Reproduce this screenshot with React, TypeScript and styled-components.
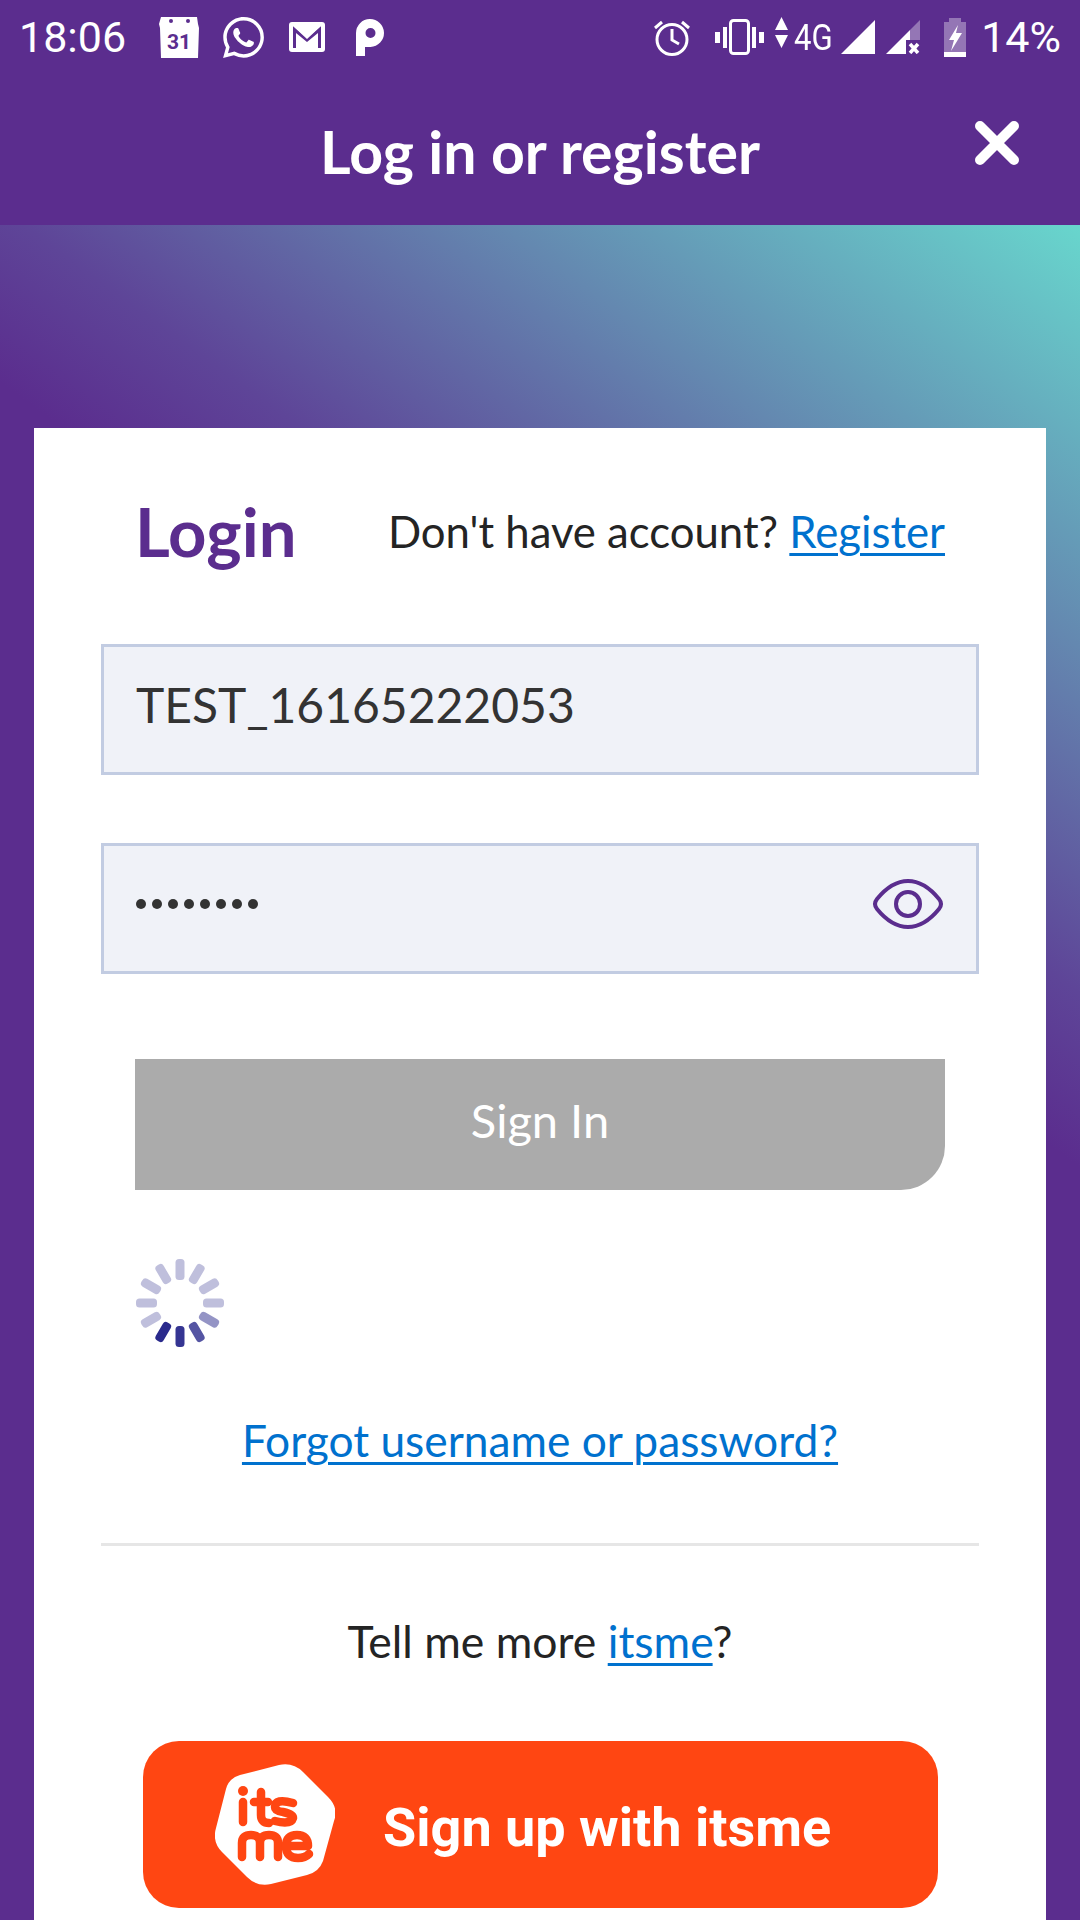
import styled, { createGlobalStyle } from 'styled-components';
import { SiWhatsapp } from 'react-icons/si';

const GlobalStyle = createGlobalStyle`
  html, body {
    margin: 0;
    padding: 0;
    background: #5b2d8e;
    font-family: 'Lato', 'Open Sans', sans-serif;
  }
`;

const Page = styled.div`
  width: 1080px;
  height: 1920px;
  overflow: hidden;
  display: flex;
  flex-direction: column;
  background: #5b2d8e;
`;

const TopArea = styled.div`
  height: 225px;
  flex-shrink: 0;
  display: flex;
  flex-direction: column;
`;

const StatusBar = styled.div`
  height: 74px;
  display: flex;
  align-items: center;
  justify-content: space-between;
  padding: 0 19px;
  color: #fff;
  font-family: 'Roboto', sans-serif;
`;

const StatusGroup = styled.div`
  display: flex;
  align-items: center;
`;

const StatusText = styled.span<{ $ml?: number }>`
  font-size: 43px;
  line-height: 1;
  margin-left: ${(p) => p.$ml || 0}px;
`;

const NetworkText = styled.span`
  display: inline-block;
  width: 37px;
  margin-left: 6px;
  font-size: 37px;
  line-height: 1;
  white-space: nowrap;
  transform: scaleX(0.84);
  transform-origin: left center;
`;

const StatusIcon = styled.svg<{ $ml?: number; $mt?: number }>`
  flex-shrink: 0;
  margin-left: ${(p) => p.$ml || 0}px;
  margin-top: ${(p) => p.$mt || 0}px;
`;

const WhatsappIcon = styled(SiWhatsapp)`
  flex-shrink: 0;
  margin-left: 24px;
`;

const Header = styled.div`
  flex: 1;
  display: flex;
  align-items: center;
  justify-content: center;
  position: relative;
  padding-top: 4px;
`;

const HeaderTitle = styled.h1`
  margin: 0;
  font-size: 59px;
  font-weight: 700;
  color: #fff;
`;

const CloseButton = styled.button`
  position: absolute;
  right: 61px;
  top: 47px;
  width: 44px;
  height: 44px;
  padding: 0;
  border: none;
  background: none;
  display: flex;
`;

const Body = styled.div`
  flex: 1;
  display: flex;
  padding: 203px 34px 0;
  background: linear-gradient(216deg, #68d6cd 0%, #6488b0 17%, #5e4598 31%, #5b2d8e 38%);
`;

const Card = styled.div`
  flex: 1;
  background: #fff;
  display: flex;
  flex-direction: column;
`;

const LoginRow = styled.div`
  height: 216px;
  box-sizing: border-box;
  flex-shrink: 0;
  display: flex;
  align-items: center;
  justify-content: space-between;
  padding: 0 101px 10px;
`;

const LoginTitle = styled.h2`
  margin: 0;
  font-size: 67px;
  font-weight: 700;
  color: #5b2d8e;
`;

const RegisterText = styled.div`
  font-size: 43.7px;
  color: #242424;
`;

const Link = styled.a`
  color: #0071ce;
  text-decoration: underline;
  text-decoration-thickness: 3px;
  text-underline-offset: 5px;
`;

const Field = styled.div<{ $mb: number }>`
  height: 131px;
  box-sizing: border-box;
  margin: 0 67px ${(p) => p.$mb}px;
  background: #f0f2f8;
  border: 3px solid #c2cce2;
  display: flex;
  align-items: center;
  justify-content: space-between;
  padding: 0 32px 10px;
  flex-shrink: 0;
`;

const FieldValue = styled.span`
  font-size: 48px;
  color: #333;
`;

const Dots = styled.span`
  display: flex;
  gap: 6px;
`;

const Dot = styled.span`
  width: 10px;
  height: 10px;
  border-radius: 50%;
  background: #333;
`;

const SignInButton = styled.button`
  height: 131px;
  margin: 0 101px;
  padding: 0 0 10px;
  flex-shrink: 0;
  border: none;
  background: #ababab;
  color: #fff;
  font-family: inherit;
  font-size: 47px;
  border-bottom-right-radius: 44px;
`;

const SpinnerWrap = styled.div`
  height: 90px;
  margin: 68px 0 0 101px;
  flex-shrink: 0;
  display: flex;
`;

const SpinnerSvg = styled.svg`
  filter: blur(0.7px);
`;

const Forgot = styled.div`
  margin-top: 67px;
  text-align: center;
  font-size: 44.3px;
  line-height: 50px;
  flex-shrink: 0;
`;

const Divider = styled.div`
  height: 3px;
  margin: 78px 67px 0;
  background: #e6e6e6;
  flex-shrink: 0;
`;

const TellMore = styled.div`
  margin-top: 70px;
  text-align: center;
  font-size: 44.5px;
  line-height: 50px;
  color: #242424;
  flex-shrink: 0;
`;

const ItsmeButton = styled.button`
  height: 167px;
  margin: 75px 108px 0 109px;
  flex-shrink: 0;
  border: none;
  border-radius: 36px;
  background: #ff4612;
  color: #fff;
  display: flex;
  align-items: center;
  padding: 0 0 0 72px;
  gap: 48px;
  font-family: 'Roboto', sans-serif;
  font-weight: 700;
  font-size: 54px;
`;

const ItsmeLabel = styled.span`
  padding-top: 6px;
`;

function Spinner() {
  const bars = [0.3, 0.3, 0.3, 0.3, 0.5, 0.8, 0.95, 1, 0.3, 0.3, 0.3, 0.3];
  return (
    <SpinnerSvg width="90" height="90" viewBox="0 0 90 90">
      {bars.map((o, i) => (
        <rect
          key={i}
          x="40.5"
          y="1"
          width="9"
          height="21"
          rx="3.5"
          fill="#2a2a8c"
          opacity={o}
          transform={`rotate(${i * 30} 45 45)`}
        />
      ))}
    </SpinnerSvg>
  );
}

function ItsmeLogo() {
  return (
    <svg width="120" height="121" viewBox="0 0 120 121">
      <path
        d="M25 11 L64 1 Q78 -2 88 8 L113 33 Q124 44 119 57 L108 97 Q104 108 92 111 L56 120 Q42 123 32 113 L7 88 Q-3 78 1 64 L11 25 Q14 14 25 11 Z"
        fill="#fff"
      />
      <g fill="none" stroke="#ff4612" strokeWidth="8.500" strokeLinecap="round" strokeLinejoin="round">
        <path d="M28 38 V58" />
        <path d="M46 28 V51 Q46 59 54 59 M39 38 H53" />
        <path d="M78 39 Q60 34 60 43 Q60 47 68 48 Q78 50 78 54 Q76 61 60 57" />
        <path d="M27 93 V79 Q27 71 36 71 Q45 71 45 79 V93 M45 79 Q45 71 54 71 Q63 71 63 79 V93" />
        <path d="M72 82 H93 Q93 71 82 71 Q71 71 71 82 Q71 94 83 94 Q90 94 94 90" />
      </g>
      <circle cx="28" cy="27" r="5" fill="#ff4612" />
    </svg>
  );
}

export default function App() {
  return (
    <Page>
      <GlobalStyle />
      <TopArea>
        <StatusBar>
          <StatusGroup>
            <StatusText>18:06</StatusText>
            <StatusIcon $ml={33} width="40" height="42" viewBox="0 0 40 42">
              <path d="M2 1 H38 L39 8 L40 12 L39 42 H2 L1 12 L0 8 Z" fill="#fff" />
              <circle cx="12" cy="5" r="2" fill="#5b2d8e" />
              <circle cx="29" cy="5" r="2" fill="#5b2d8e" />
              <text x="20" y="33" textAnchor="middle" fontSize="21" fontWeight="700" fontFamily="Roboto" fill="#5b2d8e">31</text>
            </StatusIcon>
            <WhatsappIcon size={41} color="#fff" />
            <StatusIcon $ml={25} width="36" height="30" viewBox="0 0 36 30">
              <rect width="36" height="30" rx="3" fill="#fff" />
              <path d="M4 4 L18 16 L32 4 V26 H29 V11 L18 20 L7 11 V26 H4 Z" fill="#5b2d8e" />
              <path d="M4 4 H9 L18 12 L27 4 H32 L18 17 Z" fill="#fff" />
            </StatusIcon>
            <StatusIcon $ml={31} width="29" height="37" viewBox="0 0 29 37">
              <path d="M0 37 V14 A14 14 0 1 1 14.500 28 H9 V37 Z M14.500 9 A5 5 0 1 0 14.500 19 A5 5 0 1 0 14.500 9 Z" fill="#fff" fillRule="evenodd" />
            </StatusIcon>
          </StatusGroup>
          <StatusGroup>
            <StatusIcon width="36" height="37" viewBox="0 0 36 37" fill="none" stroke="#fff" strokeWidth="3">
              <circle cx="18" cy="20.500" r="15" />
              <path d="M18 10 V21 L25 25" />
              <path d="M1 9 L8 3 M35 9 L28 3" />
            </StatusIcon>
            <StatusIcon $ml={25} width="49" height="36" viewBox="0 0 49 36">
              <rect x="15.500" y="1.500" width="18" height="33" rx="3" fill="none" stroke="#fff" strokeWidth="3" />
              <path d="M0 13 H5 V24 H0 Z M8 8 H12 V29 H8 Z M37 8 H41 V29 H37 Z M44 13 H49 V24 H44 Z" fill="#fff" />
            </StatusIcon>
            <StatusIcon $ml={11} $mt={-10} width="13" height="31" viewBox="0 0 13 31">
              <path d="M6.500 0 L13 13 H0 Z M0 18 H13 L6.500 31 Z" fill="#fff" />
            </StatusIcon>
            <NetworkText>4G</NetworkText>
            <StatusIcon $ml={10} width="34" height="34" viewBox="0 0 34 34">
              <path d="M34 0 V34 H0 Z" fill="#fff" />
            </StatusIcon>
            <StatusIcon $ml={11} width="34" height="34" viewBox="0 0 34 34">
              <path d="M34 0 V20 H24 V10 Z" fill="#fff" opacity="0.35" />
              <path d="M24 10 V20 H20 V34 H0 Z" fill="#fff" />
              <path d="M24 24 L32 33 M32 24 L24 33" stroke="#fff" strokeWidth="3.500" />
            </StatusIcon>
            <StatusIcon $ml={24} width="22" height="39" viewBox="0 0 22 39">
              <path d="M5 0 H17 V4 H22 V39 H0 V4 H5 Z" fill="#fff" opacity="0.35" />
              <rect y="34" width="22" height="5" fill="#fff" />
              <path d="M14 7 L5 22 H10 L7 33 L18 15 H12 Z" fill="#fff" />
            </StatusIcon>
            <StatusText $ml={15}>14%</StatusText>
          </StatusGroup>
        </StatusBar>
        <Header>
          <HeaderTitle>Log in or register</HeaderTitle>
          <CloseButton aria-label="Close">
            <svg width="44" height="44" viewBox="0 0 44 44">
              <path d="M5 5 L39 39 M39 5 L5 39" stroke="#fff" strokeWidth="10" strokeLinecap="round" />
            </svg>
          </CloseButton>
        </Header>
      </TopArea>
      <Body>
        <Card>
          <LoginRow>
            <LoginTitle>Login</LoginTitle>
            <RegisterText>
              Don't have account? <Link>Register</Link>
            </RegisterText>
          </LoginRow>
          <Field $mb={68}>
            <FieldValue>TEST_16165222053</FieldValue>
          </Field>
          <Field $mb={85}>
            <Dots>
              {Array.from({ length: 8 }).map((_, i) => (
                <Dot key={i} />
              ))}
            </Dots>
            <svg width="72" height="50" viewBox="0 0 72 50" fill="none" stroke="#5b2d8e" strokeWidth="4">
              <path d="M5 20 C14 9 25 2 36 2 C47 2 58 9 67 20 Q71 25 67 30 C58 41 47 48 36 48 C25 48 14 41 5 30 Q1 25 5 20 Z" />
              <circle cx="36" cy="25" r="12" />
            </svg>
          </Field>
          <SignInButton>Sign In</SignInButton>
          <SpinnerWrap>
            <Spinner />
          </SpinnerWrap>
          <Forgot>
            <Link>Forgot username or password?</Link>
          </Forgot>
          <Divider />
          <TellMore>
            Tell me more <Link>itsme</Link>?
          </TellMore>
          <ItsmeButton>
            <ItsmeLogo />
            <ItsmeLabel>Sign up with itsme</ItsmeLabel>
          </ItsmeButton>
        </Card>
      </Body>
    </Page>
  );
}
